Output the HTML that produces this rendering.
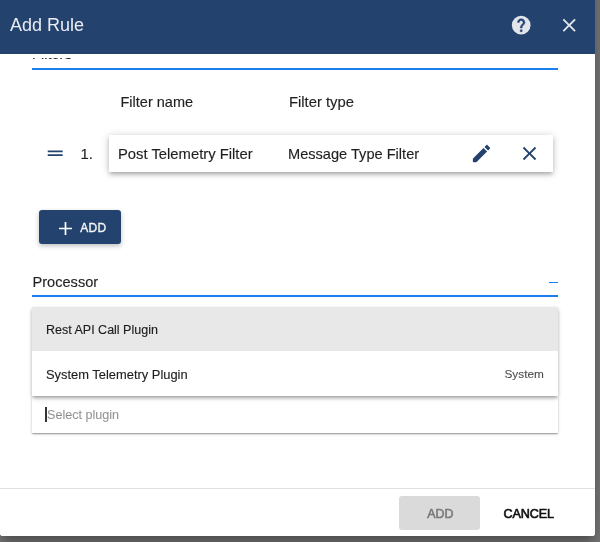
<!DOCTYPE html>
<html><head><meta charset="utf-8">
<style>
*{margin:0;padding:0;box-sizing:border-box}
html,body{width:600px;height:542px;overflow:hidden;background:#7a7a7a;font-family:"Liberation Sans",sans-serif}
.shd{position:absolute;left:0;top:-60px;width:595px;height:596px;background:#fff;border-radius:3px;
box-shadow:0 7px 8px -4px rgba(0,0,0,.2),0 13px 19px 2px rgba(0,0,0,.14),0 5px 24px 4px rgba(0,0,0,.12)}
.dlg{will-change:transform;position:absolute;left:0;top:0;width:595px;height:536px;background:#fff;border-radius:0 0 3px 3px;overflow:hidden}
.hdr{position:absolute;left:0;top:0;width:595px;height:54px;background:#23426e}
.abs{position:absolute;white-space:nowrap}
.title{left:10px;top:14px;font-size:18px;color:rgba(255,255,255,.9);line-height:22px}
.t87{color:rgba(0,0,0,.87);-webkit-text-stroke:.2px rgba(0,0,0,.6)}
.uline{position:absolute;left:32px;width:526px;height:2px;background:#1a7ff0}
.card{position:absolute;left:109px;top:135px;width:444px;height:37px;background:#fff;
box-shadow:0 1px 8px 0 rgba(0,0,0,.2),0 3px 4px 0 rgba(0,0,0,.14),0 3px 3px -2px rgba(0,0,0,.12)}
.btn{position:absolute;left:39px;top:210.3px;width:82px;height:33.4px;background:#23426e;border-radius:3px;
box-shadow:0 2px 5px 0 rgba(0,0,0,.26)}
.list{position:absolute;left:32px;top:307px;width:526px;height:89px;background:#fff;
box-shadow:0 3px 5px -1px rgba(0,0,0,.2),0 2px 3px 0 rgba(0,0,0,.14),0 1px 4px 0 rgba(0,0,0,.1);z-index:2}
.inp{position:absolute;left:32px;top:397px;width:526px;height:36px;background:#fff;
box-shadow:0 1px 3px 0 rgba(0,0,0,.2),0 1px 1px 0 rgba(0,0,0,.14),0 2px 1px -1px rgba(0,0,0,.12)}
</style></head><body>
<div class="shd"></div>
<div class="dlg">
  <!-- scrolled content -->
  <div class="abs t87" style="left:32px;top:46px;font-size:14.6px;line-height:17px">Filters</div>
  <div class="abs" style="left:0;top:50px;width:595px;height:8px;background:#fff"></div>
  <div class="uline" style="top:68px"></div>

  <div class="abs t87" style="left:120.5px;top:94px;font-size:14.5px;line-height:17px">Filter name</div>
  <div class="abs t87" style="left:289px;top:94px;font-size:14.8px;line-height:17px">Filter type</div>

  <svg class="abs" style="left:44.2px;top:142px" width="22.4" height="22.4" viewBox="0 0 24 24"><path fill="#23426e" d="M20 9H4v2h16V9zM4 15h16v-2H4v2z"/></svg>
  <div class="abs t87" style="left:80.5px;top:146px;font-size:14.8px;line-height:17px">1.</div>

  <div class="card"></div>
  <div class="abs t87" style="left:118px;top:146px;font-size:14.8px;line-height:17px">Post Telemetry Filter</div>
  <div class="abs t87" style="left:288px;top:146px;font-size:14.6px;line-height:17px">Message Type Filter</div>
  <svg class="abs" style="left:469.6px;top:141.6px" width="23" height="23" viewBox="0 0 24 24"><path fill="#23426e" d="M3 17.46v3.04c0 .28.22.5.5.5h3.04c.13 0 .26-.05.35-.15L17.81 9.94l-3.75-3.75L3.15 17.1c-.1.1-.15.22-.15.36zM20.71 7.04c.39-.39.39-1.02 0-1.41l-2.34-2.34c-.39-.39-1.02-.39-1.41 0l-1.83 1.83 3.75 3.75 1.83-1.83z"/></svg>
  <svg class="abs" style="left:518px;top:141.8px" width="23" height="23" viewBox="0 0 24 24"><path fill="#23426e" d="M19 6.41L17.59 5 12 10.59 6.41 5 5 6.41 10.59 12 5 17.59 6.41 19 12 13.41 17.59 19 19 17.59 13.41 12z"/></svg>

  <div class="btn"></div>
  <svg class="abs" style="left:58.7px;top:221.7px" width="13" height="13" viewBox="0 0 13 13"><path d="M6.5 0V13M0 6.5H13" stroke="#fff" stroke-width="1.7" fill="none"/></svg>
  <div class="abs" style="left:80.3px;top:221px;font-size:12px;line-height:14px;color:rgba(255,255,255,.92);-webkit-text-stroke:.35px rgba(255,255,255,.92);letter-spacing:.3px">ADD</div>

  <div class="abs t87" style="left:32.5px;top:274px;font-size:14.6px;line-height:17px">Processor</div>
  <div class="abs" style="left:549px;top:282px;width:9px;height:1.2px;background:#1a7ff0"></div>
  <div class="uline" style="top:295px"></div>

  <div class="list">
    <div style="position:absolute;left:0;top:0;width:526px;height:44px;background:#e8e8e8"></div>
  </div>
  <div class="abs t87" style="left:46px;top:323px;font-size:12.5px;line-height:15px;z-index:3">Rest API Call Plugin</div>
  <div class="abs t87" style="left:46px;top:367px;font-size:12.9px;line-height:15px;z-index:3">System Telemetry Plugin</div>
  <div class="abs" style="left:504.5px;top:367px;font-size:11.8px;line-height:15px;color:rgba(0,0,0,.7);-webkit-text-stroke:.2px rgba(0,0,0,.4);z-index:3">System</div>

  <div class="inp"></div>
  <div class="abs" style="left:45.3px;top:407px;width:1.6px;height:15px;background:#333"></div>
  <div class="abs" style="left:47px;top:408px;font-size:12.6px;line-height:15px;color:rgba(0,0,0,.4);-webkit-text-stroke:.2px rgba(0,0,0,.25)">Select plugin</div>

  <div class="hdr"></div>
  <div class="abs title">Add Rule</div>
  <svg class="abs" style="left:509.8px;top:13.5px" width="22.4" height="22.4" viewBox="0 0 24 24"><circle cx="12" cy="12" r="10" fill="#e2e6ec"/><path fill="#23426e" stroke="#23426e" stroke-width=".45" d="M13 19h-2v-2h2v2zM15.07 11.25l-.9.92C13.45 12.9 13 13.5 13 15h-2v-.5c0-1.1.45-2.1 1.17-2.83l1.24-1.26c.37-.36.59-.86.59-1.41 0-1.1-.9-2-2-2s-2 .9-2 2H8c0-2.21 1.79-4 4-4s4 1.79 4 4c0 .88-.36 1.68-.93 2.25z"/></svg>
  <svg class="abs" style="left:558px;top:14.3px" width="22.4" height="22.4" viewBox="0 0 24 24"><path fill="rgba(255,255,255,.87)" d="M19 6.41L17.59 5 12 10.59 6.41 5 5 6.41 10.59 12 5 17.59 6.41 19 12 13.41 17.59 19 19 17.59 13.41 12z"/></svg>

  <div class="abs" style="left:0;top:488px;width:595px;height:1px;background:#e0e0e0"></div>
  <div class="abs" style="left:399px;top:496px;width:81px;height:33.5px;background:#dadada;border-radius:3px"></div>
  <div class="abs" style="left:427.3px;top:507px;font-size:12.4px;line-height:14px;color:#7a7a7a;-webkit-text-stroke:.6px #7a7a7a">ADD</div>
  <div class="abs" style="left:503.5px;top:506.5px;font-size:12.6px;line-height:14px;color:rgba(0,0,0,.9);-webkit-text-stroke:.65px rgba(0,0,0,.9);letter-spacing:-.1px">CANCEL</div>
</div>
</body></html>
